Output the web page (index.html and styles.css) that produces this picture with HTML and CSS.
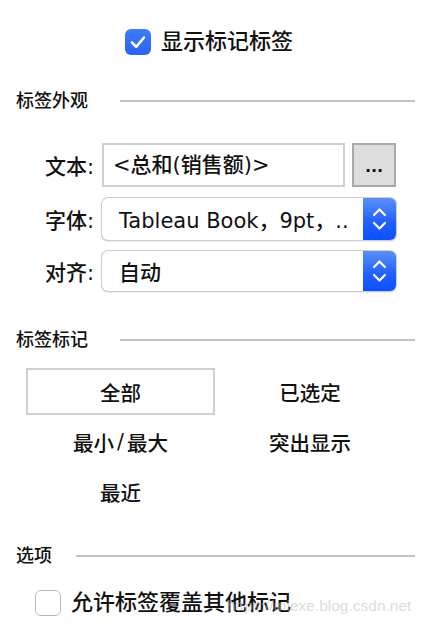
FILE: index.html
```html
<!DOCTYPE html>
<html>
<head>
<meta charset="utf-8">
<link rel="stylesheet" href="styles.css">
</head>
<body>
<div class="panel">
  <div class="top">
    <span class="cb checked">
      <svg width="26" height="26" viewBox="0 0 26 26"><path d="M7 13.5 L11.2 17.8 L19 8.5" fill="none" stroke="#fff" stroke-width="2.6" stroke-linecap="round" stroke-linejoin="round"/></svg>
    </span>
    <span class="top-label">显示标记标签</span>
  </div>

  <div class="header h1"><span>标签外观</span><i class="rule"></i></div>

  <div class="form">
    <div class="row r-text">
      <span class="lbl">文本:</span>
      <div class="input">&lt;总和(销售额)&gt;</div>
      <div class="dots">...</div>
    </div>
    <div class="row r-font">
      <span class="lbl">字体:</span>
      <div class="select">
        <span class="sel-text">Tableau Book，9pt，..</span>
        <span class="stepper"><svg width="33" height="42" viewBox="0 0 33 42"><path d="M11 17 L16.5 11.5 L22 17 M11 25 L16.5 30.5 L22 25" fill="none" stroke="#fff" stroke-width="2.2" stroke-linecap="round" stroke-linejoin="round"/></svg></span>
      </div>
    </div>
    <div class="row r-align">
      <span class="lbl">对齐:</span>
      <div class="select short">
        <span class="sel-text">自动</span>
        <span class="stepper"><svg width="33" height="40" viewBox="0 0 33 40"><path d="M11 16 L16.5 10.5 L22 16 M11 24 L16.5 29.5 L22 24" fill="none" stroke="#fff" stroke-width="2.2" stroke-linecap="round" stroke-linejoin="round"/></svg></span>
      </div>
    </div>
  </div>

  <div class="header h2"><span>标签标记</span><i class="rule"></i></div>

  <div class="marks">
    <div class="mark active">全部</div>
    <div class="mark">已选定</div>
    <div class="mark">最小<span class="slash">/</span>最大</div>
    <div class="mark">突出显示</div>
    <div class="mark">最近</div>
  </div>

  <div class="header h3"><span>选项</span><i class="rule"></i></div>

  <div class="opt">
    <span class="cb"></span>
    <span class="opt-label">允许标签覆盖其他标记</span>
  </div>

  <div class="watermark">https://mlexe.blog.csdn.net</div>
</div>
</body>
</html>
```

FILE: styles.css
```css
* { box-sizing: border-box; }
html, body { margin: 0; padding: 0; background: #fff; }
body {
  font-family: "DejaVu Sans", "Noto Sans CJK SC", sans-serif;
  font-weight: 500;
  color: #111;
}
.panel {
  position: relative;
  width: 422px;
  height: 630px;
  overflow: hidden;
}
.top {
  display: flex;
  align-items: center;
  justify-content: center;
  gap: 10px;
  margin-top: 29px;
  height: 26px;
  padding-right: 4px;
}
.cb {
  width: 26px;
  height: 26px;
  border-radius: 6px;
  border: 1px solid #b9b9b9;
  background: #fff;
  display: block;
  flex: none;
}
.cb.checked {
  border: none;
  background: linear-gradient(#3e7cf8, #2a64f4);
}
.cb svg { display: block; }
.top-label {
  font-size: 22px;
  line-height: 26px;
}
.header {
  display: flex;
  align-items: center;
  height: 22px;
  padding-left: 16px;
  padding-right: 7px;
  font-size: 18px;
  line-height: 22px;
}
.header .rule {
  flex: 1;
  height: 2px;
  background: #c3c3c3;
  margin-left: 32px;
}
.h3 .rule { margin-left: 24px; }
.h1 { margin-top: 35px; }
.form {
  margin-top: 31px;
  display: flex;
  flex-direction: column;
  gap: 11px;
}
.row {
  display: flex;
  align-items: center;
}
.lbl {
  width: 102px;
  padding-left: 45px;
  font-size: 21px;
  flex: none;
}
.input {
  width: 243px;
  height: 44px;
  border: 2px solid #cfcfcf;
  font-size: 21px;
  line-height: 40px;
  padding-left: 9px;
  white-space: nowrap;
}
.dots {
  width: 44px;
  height: 44px;
  margin-left: 7px;
  background: #dddddd;
  border: 2px solid #a9a9a9;
  font-size: 16px;
  font-weight: bold;
  text-align: center;
  line-height: 44px;
}
.select {
  width: 294px;
  height: 42px;
  display: flex;
  border-radius: 6px;
  box-shadow: 0 0 0 1px #cdcdcd, 0 1px 2px rgba(0,0,0,0.25);
  overflow: hidden;
}
.select.short { height: 40px; }
.sel-text {
  flex: 1;
  font-size: 21px;
  padding-left: 17px;
  display: flex;
  align-items: center;
  white-space: nowrap;
  overflow: hidden;
}
.stepper {
  width: 33px;
  flex: none;
  background: linear-gradient(#5b90f8, #1f5eff 60%, #0d50ff);
  display: flex;
  align-items: center;
}
.stepper svg { display: block; }
.h2 { margin-top: 38px; }
.marks {
  margin-top: 17px;
  margin-left: 26px;
  display: grid;
  grid-template-columns: 189px 190px;
  grid-auto-rows: 50px;
}
.mark {
  height: 47px;
  display: flex;
  align-items: center;
  justify-content: center;
  font-size: 20.5px;
}
.mark .slash { margin: 0 3px; }
.mark.active {
  border: 2px solid #cfcfcf;
}
.h3 { margin-top: 27px; }
.opt {
  margin-top: 23px;
  padding-left: 35px;
  display: flex;
  align-items: center;
  gap: 10px;
  height: 26px;
}
.opt-label {
  font-size: 22px;
  line-height: 26px;
}
.watermark {
  position: absolute;
  left: 227px;
  top: 597px;
  font-family: "Liberation Sans", Arial, sans-serif;
  font-weight: normal;
  font-size: 15.5px;
  color: rgba(190,190,190,0.55);
  white-space: nowrap;
}
```
